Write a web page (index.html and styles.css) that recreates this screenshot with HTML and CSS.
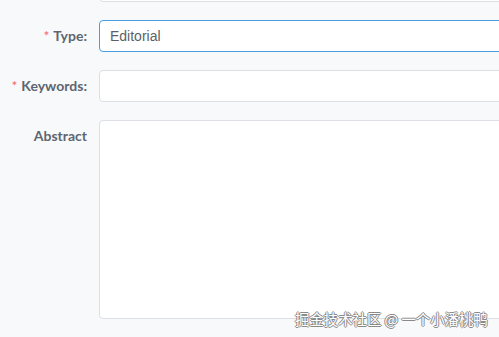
FILE: index.html
```html
<!DOCTYPE html>
<html>
<head>
<meta charset="utf-8">
<link rel="stylesheet" href="styles.css">
</head>
<body>
<div class="page">
  <form class="form">
    <div class="row row-prev">
      <label class="label"></label>
      <div class="control"><input class="input" type="text"></div>
    </div>
    <div class="row">
      <label class="label"><span class="req">*</span>Type:</label>
      <div class="control"><input class="input focus" type="text" value="Editorial"></div>
    </div>
    <div class="row">
      <label class="label"><span class="req">*</span>Keywords:</label>
      <div class="control"><input class="input" type="text"></div>
    </div>
    <div class="row">
      <label class="label">Abstract</label>
      <div class="control"><textarea class="textarea"></textarea></div>
    </div>
  </form>
  <div class="watermark">掘金技术社区 @ 一个小潘桃鸭</div>
</div>
</body>
</html>
```
FILE: styles.css
```css
html, body {
  margin: 0;
  padding: 0;
  background: #f8f9fb;
  overflow: hidden;
}
.page {
  position: relative;
  width: 499px;
  height: 337px;
  overflow: hidden;
}
.form {
  display: flex;
  flex-direction: column;
  gap: 18px;
  margin-top: -30px;
}
.row {
  display: flex;
  align-items: flex-start;
}
.label {
  width: 87px;
  padding-right: 12px;
  box-sizing: content-box;
  text-align: right;
  font-family: Lato, "Open Sans", sans-serif;
  font-weight: 700;
  font-size: 14px;
  line-height: 32px;
  color: #5e6670;
  flex-shrink: 0;
}
.req {
  color: #f26a6a;
  margin-right: 4px;
  font-weight: 400;
}
.control {
  flex: 1;
  min-width: 420px;
}
.input {
  display: block;
  box-sizing: border-box;
  width: 440px;
  height: 32px;
  border: 1px solid #dcdfe6;
  border-radius: 4px;
  background: #fff;
  padding: 0 10px;
  font-family: "Liberation Sans", Arial, sans-serif;
  font-size: 14px;
  color: #5b5f66;
  outline: none;
}
.input.focus {
  border-color: #4a9ee0;
}
.textarea {
  display: block;
  box-sizing: border-box;
  width: 440px;
  height: 199px;
  border: 1px solid #dcdfe6;
  border-radius: 4px;
  background: #fff;
  resize: none;
  outline: none;
}
.watermark {
  position: absolute;
  left: 295px;
  top: 309px;
  font-family: "Noto Sans CJK SC", sans-serif;
  font-size: 14.4px;
  line-height: 20px;
  color: #ffffff;
  text-shadow: 1px 0 0 #8a8a8a, -1px 0 0 #8a8a8a, 0 1px 0 #8a8a8a, 0 -1px 0 #8a8a8a;
  white-space: nowrap;
}
```
